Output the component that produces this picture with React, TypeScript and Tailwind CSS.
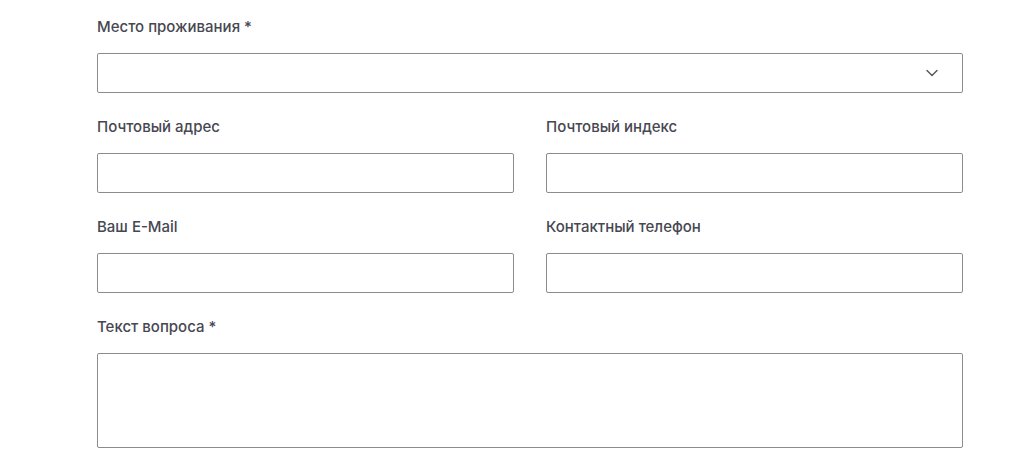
import { ChevronDown } from 'lucide-react';

const labelCls = "block text-[15px] leading-5 font-medium text-[#474752] mb-4";
const inputCls = "block w-full h-10 border border-[#8c8c8c] rounded-[2px] bg-white px-3 text-[15px] outline-none";

export default function App() {
  return (
    <div className="min-h-screen bg-white font-['Inter',sans-serif]">
      <form className="w-[866px] ml-[97px] pt-[17px] flex flex-col gap-6">
        <div>
          <label className={labelCls}>Место проживания *</label>
          <div className="relative">
            <select className={inputCls + " appearance-none"} defaultValue="">
              <option value=""></option>
            </select>
            <ChevronDown className="absolute right-[21px] top-[10px] w-5 h-5 text-[#5a5a5a] pointer-events-none" strokeWidth={1.75} />
          </div>
        </div>
        <div className="grid grid-cols-2 gap-8">
          <div>
            <label className={labelCls}>Почтовый адрес</label>
            <input className={inputCls} />
          </div>
          <div>
            <label className={labelCls}>Почтовый индекс</label>
            <input className={inputCls} />
          </div>
        </div>
        <div className="grid grid-cols-2 gap-8">
          <div>
            <label className={labelCls}>Ваш E-Mail</label>
            <input className={inputCls} />
          </div>
          <div>
            <label className={labelCls}>Контактный телефон</label>
            <input className={inputCls} />
          </div>
        </div>
        <div>
          <label className={labelCls}>Текст вопроса *</label>
          <textarea className={inputCls + " h-[95px] resize-none py-2"} />
        </div>
      </form>
    </div>
  );
}
